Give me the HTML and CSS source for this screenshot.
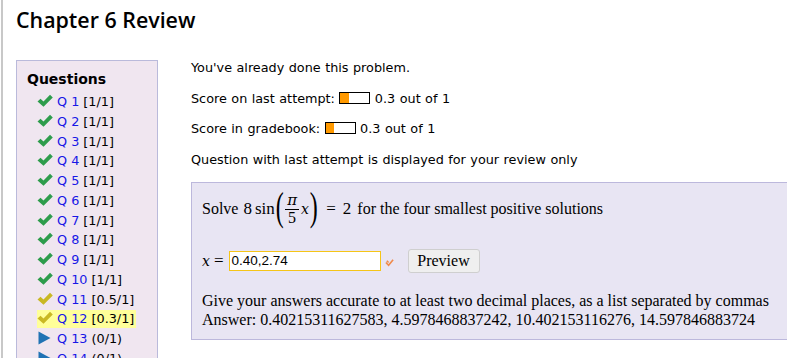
FILE: index.html
```html
<!DOCTYPE html>
<html>
<head>
<meta charset="utf-8">
<link rel="stylesheet" href="styles.css">
</head>
<body>
<div class="page">
  <h1 class="title">Chapter 6 Review</h1>
  <div class="layout">
    <aside class="sidebar">
      <div class="side-head">Questions</div>
      <ul class="qlist">
        <li><svg class="ic" viewBox="0 0 16 14"><path class="ok" d="M0.5 7.5 L3.5 4.8 L6.5 7.6 L13 0.8 L15.8 3.4 L6.5 12.8 Z"/></svg><a>Q 1</a> [1/1]</li>
        <li><svg class="ic" viewBox="0 0 16 14"><path class="ok" d="M0.5 7.5 L3.5 4.8 L6.5 7.6 L13 0.8 L15.8 3.4 L6.5 12.8 Z"/></svg><a>Q 2</a> [1/1]</li>
        <li><svg class="ic" viewBox="0 0 16 14"><path class="ok" d="M0.5 7.5 L3.5 4.8 L6.5 7.6 L13 0.8 L15.8 3.4 L6.5 12.8 Z"/></svg><a>Q 3</a> [1/1]</li>
        <li><svg class="ic" viewBox="0 0 16 14"><path class="ok" d="M0.5 7.5 L3.5 4.8 L6.5 7.6 L13 0.8 L15.8 3.4 L6.5 12.8 Z"/></svg><a>Q 4</a> [1/1]</li>
        <li><svg class="ic" viewBox="0 0 16 14"><path class="ok" d="M0.5 7.5 L3.5 4.8 L6.5 7.6 L13 0.8 L15.8 3.4 L6.5 12.8 Z"/></svg><a>Q 5</a> [1/1]</li>
        <li><svg class="ic" viewBox="0 0 16 14"><path class="ok" d="M0.5 7.5 L3.5 4.8 L6.5 7.6 L13 0.8 L15.8 3.4 L6.5 12.8 Z"/></svg><a>Q 6</a> [1/1]</li>
        <li><svg class="ic" viewBox="0 0 16 14"><path class="ok" d="M0.5 7.5 L3.5 4.8 L6.5 7.6 L13 0.8 L15.8 3.4 L6.5 12.8 Z"/></svg><a>Q 7</a> [1/1]</li>
        <li><svg class="ic" viewBox="0 0 16 14"><path class="ok" d="M0.5 7.5 L3.5 4.8 L6.5 7.6 L13 0.8 L15.8 3.4 L6.5 12.8 Z"/></svg><a>Q 8</a> [1/1]</li>
        <li><svg class="ic" viewBox="0 0 16 14"><path class="ok" d="M0.5 7.5 L3.5 4.8 L6.5 7.6 L13 0.8 L15.8 3.4 L6.5 12.8 Z"/></svg><a>Q 9</a> [1/1]</li>
        <li><svg class="ic" viewBox="0 0 16 14"><path class="ok" d="M0.5 7.5 L3.5 4.8 L6.5 7.6 L13 0.8 L15.8 3.4 L6.5 12.8 Z"/></svg><a>Q 10</a> [1/1]</li>
        <li><svg class="ic" viewBox="0 0 16 14"><path class="part" d="M0.5 7.5 L3.5 4.8 L6.5 7.6 L13 0.8 L15.8 3.4 L6.5 12.8 Z"/></svg><a>Q 11</a> [0.5/1]</li>
        <li><span class="current"><svg class="ic" viewBox="0 0 16 14"><path class="part" d="M0.5 7.5 L3.5 4.8 L6.5 7.6 L13 0.8 L15.8 3.4 L6.5 12.8 Z"/></svg><a>Q 12</a> [0.3/1]</span></li>
        <li><svg class="ic" viewBox="0 0 16 14"><path class="todo" d="M1.5 0.5 L13.5 7 L1.5 13.5 Z"/></svg><a>Q 13</a> (0/1)</li>
        <li><svg class="ic" viewBox="0 0 16 14"><path class="todo" d="M1.5 0.5 L13.5 7 L1.5 13.5 Z"/></svg><a>Q 14</a> (0/1)</li>
      </ul>
    </aside>
    <main class="content">
      <p class="line">You've already done this problem.</p>
      <p class="line">Score on last attempt: <span class="bar"><span class="fill" style="width:30%"></span></span> 0.3 out of 1</p>
      <p class="line">Score in gradebook: <span class="bar"><span class="fill" style="width:30%"></span></span> 0.3 out of 1</p>
      <p class="line">Question with last attempt is displayed for your review only</p>
      <div class="qbox">
        <div class="qtext"><span>Solve</span><span class="math">8<span class="fn">sin</span><span class="paren">(</span><span class="frac"><span class="num"><i>π</i></span><span class="den">5</span></span><i class="var">x</i><span class="paren">)</span><span class="eq">=</span>2</span><span>for the four smallest positive solutions</span></div>
        <div class="answer-row">
          <span class="math"><i>x</i><span class="eq2">=</span></span>
          <span class="ans">0.40,2.74</span>
          <svg class="mini" viewBox="0 0 10 10"><path d="M1 5 L4 8 L9 2" /><path d="M2 3 L4 5" /></svg>
          <span class="btn">Preview</span>
        </div>
        <div class="hint">Give your answers accurate to at least two decimal places, as a list separated by commas<br>Answer: 0.40215311627583, 4.5978468837242, 10.402153116276, 14.597846883724</div>
      </div>
    </main>
  </div>
</div>
</body>
</html>
```
FILE: styles.css
```css
html, body {
  margin: 0;
  padding: 0;
  background: #fff;
}
body {
  font-family: "DejaVu Sans", sans-serif;
  font-size: 12.8px;
  color: #000;
  overflow: hidden;
}
.page {
  margin-left: 1px;
  border-left: 2px solid #c8c8c8;
  height: 358px;
  overflow: hidden;
  padding-left: 13px;
}
.title {
  margin: 0;
  padding-top: 6px;
  font-family: "Open Sans", sans-serif;
  font-size: 21.4px;
  font-weight: 600;
  line-height: 28px;
  height: 54px;
}
.layout {
  display: flex;
  gap: 33px;
  align-items: flex-start;
}
.sidebar {
  width: 130px;
  background: #f0e6f0;
  border: 1px solid #babadb;
  padding: 10px 0 20px 10px;
}
.side-head {
  font-weight: bold;
  font-size: 14px;
  line-height: 17px;
  margin-bottom: 4px;
}
.qlist {
  list-style: none;
  margin: 0;
  padding: 0 0 0 10px;
}
.qlist li {
  line-height: 19.75px;
  height: 19.75px;
  white-space: nowrap;
}
.current {
  background: #ffff99;
  padding-right: 2px;
  display: inline-block;
  line-height: 18px;
}
.ic {
  width: 16px;
  height: 14px;
  vertical-align: -2px;
  margin-right: 4px;
}
.ok { fill: #2e9c4c; }
.part { fill: #c9b823; }
.todo { fill: #2073b4; }
.qlist a {
  color: #1717e6;
}
.content {
  flex: 1;
  min-width: 0;
}
.line {
  margin: 0 0 14.5px 0;
  line-height: 16px;
  word-spacing: 0.4px;
}
.bar {
  display: inline-block;
  width: 29px;
  height: 10px;
  border: 1px solid #000;
  vertical-align: -1px;
  background: #fff;
}
.fill {
  display: block;
  height: 100%;
  background: #f90;
}
.qbox {
  margin-top: 1px;
  background: #e8e5f3;
  border: 1px solid #bcb8dc;
  border-right: none;
  padding: 9px 0 12px 10px;
  font-family: "Liberation Serif", serif;
  font-size: 16px;
  height: 135px;
}
.qtext {
  display: flex;
  align-items: center;
  height: 34px;
  white-space: nowrap;
}
.math {
  display: inline-flex;
  align-items: center;
  font-size: 17px;
}
.qtext .math { margin: 0 6px 0 5px; }
.math i {
  font-family: "DejaVu Serif", serif;
  font-size: 14px;
}
.fn { margin-left: 3px; }
.paren {
  font-size: 40px;
  line-height: 34px;
  transform: scaleX(0.6);
  display: inline-block;
  margin: -5px -2px 0;
}
.frac {
  display: inline-flex;
  flex-direction: column;
  align-items: center;
  font-size: 14px;
  line-height: 14px;
  margin: 0 1px;
}
.frac .num {
  border-bottom: 1px solid #000;
  padding: 0 2px 1px;
}
.frac .num i { font-size: 15px; }
.frac .den { padding-top: 1px; font-size: 16px; }
.var { margin-left: 1px; }
.eq { margin: 0 7px 0 8px; }
.eq2 { margin: 0 3px 0 4px; }
.answer-row {
  display: flex;
  align-items: center;
  margin-top: 23px;
  height: 24px;
}
.ans {
  display: inline-block;
  box-sizing: border-box;
  width: 152px;
  height: 20px;
  margin-left: 2px;
  border: 1px solid #f5c518;
  background: #fff;
  font-family: "Liberation Sans", sans-serif;
  font-size: 13.5px;
  line-height: 18px;
  padding-left: 2px;
}
.mini {
  width: 9px;
  height: 9px;
  margin: 2px 14px 0 4px;
  fill: none;
  stroke: #f08a4b;
  stroke-width: 1.8;
}
.btn {
  display: inline-block;
  box-sizing: border-box;
  height: 24px;
  width: 72px;
  border: 1px solid #cfcfcf;
  border-radius: 3px;
  background: #efefef;
  text-align: center;
  line-height: 22px;
  font-size: 16px;
}
.hint {
  margin-top: 18px;
  line-height: 19px;
  white-space: nowrap;
}
```
